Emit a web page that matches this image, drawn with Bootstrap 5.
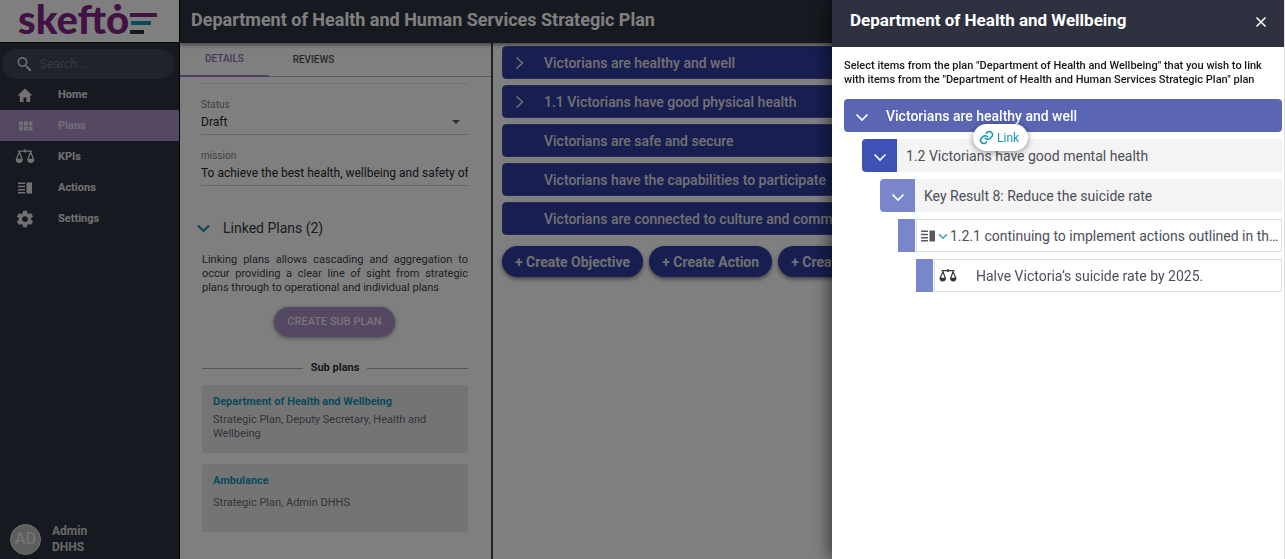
<!DOCTYPE html>
<html lang="en">
<head>
<meta charset="utf-8">
<meta name="viewport" content="width=device-width, initial-scale=1">
<title>Skefto - Strategic Plan</title>
<link href="https://cdn.jsdelivr.net/npm/bootstrap@5.3.0/dist/css/bootstrap.min.css" rel="stylesheet">
<style>
:root{--ink:#2e3240;--violet:#aa90c6;--teal:#1494b8;--indigo:#303c9f}
body{font-family:Roboto,"Liberation Sans",sans-serif;font-size:13px;line-height:16px;color:#2e3240}
.side{width:180px;background:var(--ink);border-right:1px solid #000}
.brand{height:43px;background:#fff;border-bottom:1px solid #111;padding-left:18px}
.brand-name{font:900 40px/38px Lato,sans-serif;color:#822486}
.search{margin:6px 4px 0 2px;height:30px;background:#414658;border-radius:15px;padding-left:12px}
.search input{font-size:12px;line-height:16px;color:#fff}
.search input::placeholder{color:#6f7486;opacity:1}
.side-nav .nav-link{height:31px;padding:0 0 0 14px;gap:22px;color:#e2e2e4;font-size:11px;font-weight:700;border-radius:0}
.side-nav .nav-link.active{background:var(--violet);color:#e2dcec}
.side-nav svg,.search svg{width:22px;height:18px;fill:#e2e2e4;flex:none}
.user{padding:0 0 4px 10px;gap:11px;font-size:12px;font-weight:700;color:#cfcfd2}
.avatar{width:31px;height:31px;background:#bdbdbd;color:#efefef;font-size:16px;font-weight:400;border:1px solid #e0e0e0}
.topbar{height:43px;background:var(--ink);padding:0 11px 3px;box-shadow:0 2px 4px rgba(0,0,0,.45);z-index:2}
.topbar h1{font-size:18px;line-height:24px;font-weight:700;color:#fff}
.details{width:313px;border-right:2px solid #444}
.tabs{height:34px;border-bottom:1px solid #bbb}
.tabs .nav-link{width:89px;height:34px;padding:0;font-size:10px;font-weight:500;color:#555;border-radius:0}
.tabs .nav-link.active{color:#9470b8;border-bottom:2px solid #9d7cc0}
.pane{padding:6px 23px 0 21px}
.pane > hr{color:#999}
.field{border-bottom:1px solid #d2d2d2;height:51px;padding-top:14px}
.field label{font-size:10px;line-height:14px;color:#858585}
.field input,.field select{font-size:12px;line-height:20px;height:20px;color:#23252e}
.field select{appearance:none}
.linked{margin:32px 0 15px -4px;gap:13px;font-size:14px;line-height:20px;color:#333744;background:none}
.blurb{font-size:11px;line-height:14px;text-align:justify;color:#3c3f4a;margin:0 0 12px 1px}
.btn-sub{height:30px;padding:0 12px;border-radius:15px;background:var(--violet);color:#eee6f5;font-size:11px;font-weight:500;box-shadow:0 1px 4px rgba(0,0,0,.45)}
.rule{margin:23px 0 9px 1px;gap:8px;font-size:11px;font-weight:700}
.rule hr{margin:0;color:#777;opacity:.6}
.plan{margin:0 0 11px 1px;height:68px;background:#e9e9e9;border-radius:3px;padding:10px 11px;font-size:11px;line-height:14px;color:#666a74}
.plan a{color:var(--teal);font-weight:700;text-decoration:none}
.work{padding:3px 0 0 9px}
.rows{gap:6px}
.goal{height:33px;border:1px solid #4a57b0;border-radius:4px;background:var(--indigo);color:#e0e1ea;font-size:14px;font-weight:500;padding:0 0 0 9px;gap:10px;white-space:nowrap}
.goal svg{width:14px;height:14px}
.goal .slot{width:22px;height:14px;display:flex}
.new-row{gap:6px;margin-top:11px}
.btn-new{height:31px;padding:0 12px;border-radius:16px;background:var(--indigo);color:#dfe0e8;font-size:14px;font-weight:700;line-height:16px;white-space:nowrap;box-shadow:0 2px 4px rgba(0,0,0,.5)}
.drawer.offcanvas{--bs-offcanvas-width:453px;border:0;border-right:1px solid #ddd;box-shadow:-2px 0 16px rgba(0,0,0,.6)}
.drawer .offcanvas-header{height:47px;background:#2e3240;color:#fff;padding:0 17px 7px 18px}
.drawer .offcanvas-body{padding:12px 2px 0 12px}
.drawer h2{font-size:17px;line-height:22px;font-weight:700}
.shut{width:12px;height:26px;padding:9px 0 0;display:flex}
.note{font-size:11px;line-height:14px;font-weight:500;color:#15161b;margin-bottom:12px}
.tree{gap:7px}
.node{height:33px;font-size:14px;color:#4b4e59}
.toggle{width:35px;border:0;padding:0;border-radius:4px 0 0 4px;background:#3f51b5}
.node-text{background:#f4f4f4;border-radius:0 4px 4px 0;padding:0 4px 0 9px}
.l1{background:#5a65b4;color:#fff;border-radius:4px;font-weight:500}
.l1 .toggle,.l1 .node-text{background:none}
.l1 .node-text{padding-left:7px}
.l2{margin-left:18px}.l3{margin-left:36px}.l4{margin-left:54px}.l5{margin-left:72px}
.l3 .toggle{background:#7986cb}
.tick{width:17px;background:#7986cb;margin-right:1px}
.boxed{border:1px solid #e2e2e2;padding:0 0 0 3px;gap:2px;background:#fff}
.link-pill{left:129px;top:25px;height:27px;padding:0 9px 0 6px;gap:3px;border:0;border-radius:14px;background:#fff;color:var(--teal);font-size:12px;font-weight:400;box-shadow:0 1px 6px rgba(0,0,0,.45)}
</style>
</head>
<body class="vh-100 overflow-hidden">
<svg class="d-none">
  <symbol id="scales" viewBox="0 0 20 16"><path d="M9.300 1h1.400v1h5.800v1.300h-1l3 6.700c0 2.300-1.200 3.500-3.200 3.500S12 12.300 12 10l2.600-6.700h-3.300a1.500 1.500 0 0 1-2.600 0H5.400L8 10c0 2.300-1.200 3.500-3.300 3.500S1.500 12.300 1.500 10l3-6.700h-1V2h5.800zM4.800 5.200 3 9.700h3.700zM15.200 5.200l-1.900 4.500H17z"/></symbol>
  <symbol id="split" viewBox="0 0 16 14"><path d="M1 1.500h7V3H1zM1 4.700h7v1.500H1zM1 7.900h7v1.500H1zM1 11h7v1.500H1zM9.500 1.500H15v11H9.500z"/></symbol>
  <symbol id="down" viewBox="0 0 14 14"><path d="M1.500 4.500 7 10l5.500-5.500" fill="none" stroke="currentColor" stroke-width="1.700"/></symbol>
  <symbol id="right" viewBox="0 0 14 14"><path d="M4.500 1.500 10.500 7l-6 5.500" fill="none" stroke="currentColor" stroke-width="1.500"/></symbol>
</svg>
<div class="d-flex h-100">
  <aside class="side d-flex flex-column flex-shrink-0">
    <a class="brand d-flex text-decoration-none" href="#">
      <span class="brand-name">skeftȯ</span>
      <svg class="flex-shrink-0" width="28" height="40" viewBox="0 0 28 40"><path fill="#822486" d="M1 13h27v4H1z"/><path fill="#1494b8" d="M2 21h20v4H2z"/><path fill="#2e3240" d="M1 30h14v4H1z"/></svg>
    </a>
    <div class="search d-flex align-items-center gap-1">
      <svg viewBox="0 0 22 18"><path d="M8.500 2a5 5 0 1 0 3 9l.6.6v.8l4 4 1.300-1.300-4-4h-.8l-.6-.6A5 5 0 0 0 8.500 2zm0 1.700a3.400 3.400 0 1 1 0 6.800 3.400 3.400 0 0 1 0-6.800z"/></svg>
      <input class="border-0 bg-transparent p-0 w-75" type="text" placeholder="Search..." aria-label="Search">
    </div>
    <nav class="nav flex-column side-nav">
      <a class="nav-link d-flex align-items-center" href="#"><svg viewBox="0 0 22 18"><path d="M11 2.500 3.500 9.500h2.300V16h3.700v-4.500h3V16h3.700V9.500h2.300z"/></svg>Home</a>
      <a class="nav-link d-flex align-items-center active" aria-current="page" href="#"><svg viewBox="0 0 22 18"><path d="M5 4.500h4v4H5zM10 4.500h4v4h-4zM15 4.500h3.500v4H15zM5 9.500h4v4H5zM10 9.500h4v4h-4zM15 9.500h3.500v4H15z"/></svg>Plans</a>
      <a class="nav-link d-flex align-items-center" href="#"><svg><use href="#scales"/></svg>KPIs</a>
      <a class="nav-link d-flex align-items-center" href="#"><svg viewBox="-3 -2 22 18"><path d="M1 1.500h7V3H1zM1 4.700h7v1.500H1zM1 7.900h7v1.500H1zM1 11h7v1.500H1zM9.500 1.500H15v11H9.500z"/></svg>Actions</a>
      <a class="nav-link d-flex align-items-center" href="#"><svg viewBox="1 1 22 22"><path d="M19.400 13a7.500 7.500 0 0 0 0-2l2.200-1.600a.5.5 0 0 0 .1-.7l-2-3.400a.5.5 0 0 0-.6-.3l-2.500 1a7.300 7.300 0 0 0-1.700-1l-.4-2.600a.5.5 0 0 0-.5-.4h-4a.5.5 0 0 0-.5.400L9.100 5a7.700 7.700 0 0 0-1.700 1l-2.500-1a.5.5 0 0 0-.6.300l-2 3.400a.5.5 0 0 0 .1.700L4.600 11a7.900 7.900 0 0 0 0 2l-2.200 1.600a.5.5 0 0 0-.1.700l2 3.400c.1.200.4.300.6.300l2.500-1a7.300 7.300 0 0 0 1.700 1l.4 2.600c0 .2.300.4.500.4h4c.2 0 .5-.2.500-.4l.4-2.600a7.700 7.700 0 0 0 1.700-1l2.500 1c.2 0 .5 0 .6-.3l2-3.400a.5.5 0 0 0-.1-.7zM12 15.500a3.500 3.500 0 1 1 0-7 3.500 3.500 0 0 1 0 7z"/></svg>Settings</a>
    </nav>
    <div class="user d-flex align-items-center mt-auto">
      <span class="avatar rounded-circle d-flex align-items-center justify-content-center">AD</span>
      <span>Admin<br>DHHS</span>
    </div>
  </aside>
  <div class="d-flex flex-column flex-grow-1 overflow-hidden">
    <header class="topbar d-flex align-items-center position-relative"><h1 class="m-0">Department of Health and Human Services Strategic Plan</h1></header>
    <div class="d-flex flex-grow-1 overflow-hidden">
      <section class="details flex-shrink-0">
        <ul class="tabs nav">
          <li><a class="nav-link active d-flex align-items-center justify-content-center" href="#">DETAILS</a></li>
          <li><a class="nav-link d-flex align-items-center justify-content-center" href="#">REVIEWS</a></li>
        </ul>
        <div class="pane">
          <hr class="m-0">
          <div class="field">
            <label class="d-block" for="status">Status</label>
            <div class="d-flex align-items-center">
              <select id="status" class="border-0 bg-transparent p-0 flex-grow-1"><option>Draft</option></select>
              <svg class="me-2" width="8" height="4" viewBox="0 0 8 4"><path fill="#555" d="M0 0h8L4 4z"/></svg>
            </div>
          </div>
          <div class="field">
            <label class="d-block" for="mission">mission</label>
            <input id="mission" class="d-block w-100 border-0 bg-transparent p-0" type="text" value="To achieve the best health, wellbeing and safety of">
          </div>
          <button class="linked border-0 p-0 d-flex align-items-center" type="button"><svg width="13" height="9" viewBox="0 0 13 9"><path d="m1 1.500 5.500 5.500L12 1.500" fill="none" stroke="#1494b8" stroke-width="2.200"/></svg>Linked Plans (2)</button>
          <p class="blurb">Linking plans allows cascading and aggregation to occur providing a clear line of sight from strategic plans through to operational and individual plans</p>
          <div class="text-center"><button class="btn btn-sub" type="button">CREATE SUB PLAN</button></div>
          <div class="rule d-flex align-items-center"><hr class="flex-grow-1">Sub plans<hr class="flex-grow-1"></div>
          <div class="plan"><a href="#">Department of Health and Wellbeing</a><div class="mt-1">Strategic Plan, Deputy Secretary, Health and Wellbeing</div></div>
          <div class="plan"><a href="#">Ambulance</a><div class="mt-2">Strategic Plan, Admin DHHS</div></div>
        </div>
      </section>
      <main class="work flex-grow-1 overflow-hidden">
        <div class="rows d-flex flex-column">
          <button class="goal d-flex align-items-center" type="button"><span class="slot"><svg><use href="#right"/></svg></span>Victorians are healthy and well</button>
          <button class="goal d-flex align-items-center" type="button"><span class="slot"><svg><use href="#right"/></svg></span>1.1 Victorians have good physical health</button>
          <button class="goal d-flex align-items-center" type="button"><span class="slot"></span>Victorians are safe and secure</button>
          <button class="goal d-flex align-items-center" type="button"><span class="slot"></span>Victorians have the capabilities to participate</button>
          <button class="goal d-flex align-items-center" type="button"><span class="slot"></span>Victorians are connected to culture and community</button>
        </div>
        <div class="new-row d-flex pb-2">
          <button class="btn btn-new" type="button">+ Create Objective</button>
          <button class="btn btn-new" type="button">+ Create Action</button>
          <button class="btn btn-new" type="button">+ Create KPI</button>
        </div>
      </main>
    </div>
  </div>
</div>
<div class="offcanvas-backdrop show"></div>
<div class="drawer offcanvas offcanvas-end show" data-bs-backdrop="false" role="dialog" aria-labelledby="drawerTitle">
  <div class="offcanvas-header flex-shrink-0">
    <h2 class="m-0" id="drawerTitle">Department of Health and Wellbeing</h2>
    <button class="shut btn text-white border-0" type="button" aria-label="Close"><svg width="12" height="12" viewBox="0 0 12 12"><path d="m1.500 1.500 9 9m0-9-9 9" stroke="#fff" stroke-width="1.500"/></svg></button>
  </div>
  <div class="offcanvas-body">
    <p class="note">Select items from the plan "Department of Health and Wellbeing" that you wish to link<br>with items from the "Department of Health and Human Services Strategic Plan" plan</p>
    <div class="tree d-flex flex-column position-relative">
      <div class="node l1 d-flex"><button class="toggle text-white" type="button" aria-label="Collapse"><svg width="14" height="14"><use href="#down"/></svg></button><div class="node-text flex-grow-1 d-flex align-items-center">Victorians are healthy and well</div></div>
      <div class="node l2 d-flex"><button class="toggle text-white" type="button" aria-label="Collapse"><svg width="14" height="14"><use href="#down"/></svg></button><div class="node-text flex-grow-1 d-flex align-items-center">1.2 Victorians have good mental health</div></div>
      <div class="node l3 d-flex"><button class="toggle text-white" type="button" aria-label="Collapse"><svg width="14" height="14"><use href="#down"/></svg></button><div class="node-text flex-grow-1 d-flex align-items-center">Key Result 8: Reduce the suicide rate</div></div>
      <div class="node l4 d-flex"><span class="tick flex-shrink-0"></span><div class="boxed flex-grow-1 d-flex align-items-center overflow-hidden"><svg class="flex-shrink-0" width="16" height="14" fill="#555862"><use href="#split"/></svg><svg class="flex-shrink-0" width="10" height="10" color="#1494b8"><use href="#down"/></svg><span class="text-truncate">1.2.1 continuing to implement actions outlined in the suicide prevention framework</span></div></div>
      <div class="node l5 d-flex"><span class="tick flex-shrink-0"></span><div class="boxed flex-grow-1 d-flex align-items-center overflow-hidden"><svg class="flex-shrink-0 me-3" width="20" height="16" fill="#333"><use href="#scales"/></svg><span class="text-truncate">Halve Victoria’s suicide rate by 2025.</span></div></div>
      <button class="link-pill position-absolute d-flex align-items-center" type="button"><svg width="15" height="15" viewBox="0 0 24 24" fill="none" stroke="#1494b8" stroke-width="2.400" stroke-linecap="round"><path d="M10 13a5 5 0 0 0 7.500.5l3-3a5 5 0 0 0-7-7L11.700 5.200"/><path d="M14 11a5 5 0 0 0-7.500-.5l-3 3a5 5 0 0 0 7 7l1.700-1.700"/></svg>Link</button>
    </div>
  </div>
</div>
<script src="https://cdn.jsdelivr.net/npm/bootstrap@5.3.0/dist/js/bootstrap.bundle.min.js"></script>
</body>
</html>
